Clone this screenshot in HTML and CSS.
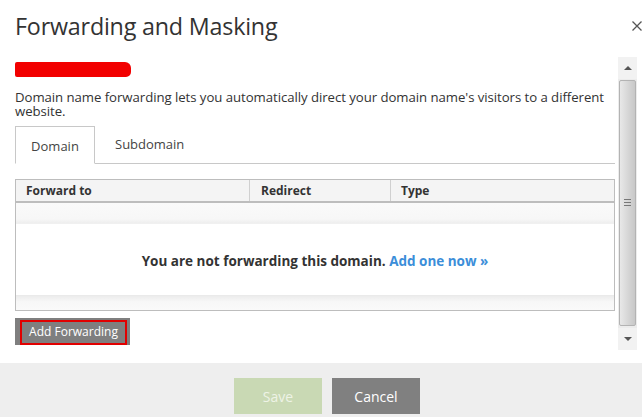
FILE: index.html
```html
<!DOCTYPE html>
<html>
<head>
<meta charset="utf-8">
<link rel="stylesheet" href="styles.css">
</head>
<body>
<div class="modal">
  <div class="header">
    <h1 class="title">Forwarding and Masking</h1>
    <svg class="close" width="10" height="10" viewBox="0 0 10 10"><path d="M0.5 0.5 L9.5 9.5 M9.5 0.5 L0.5 9.5" stroke="#555" stroke-width="1.3" fill="none"/></svg>
  </div>
  <div class="body-wrap">
    <div class="content">
      <div class="redacted"></div>
      <p class="desc">Domain name forwarding lets you automatically direct your domain name's visitors to a different website.</p>
      <div class="tabs">
        <div class="tab active">Domain</div>
        <div class="tab">Subdomain</div>
        <div class="tab-fill"></div>
      </div>
      <div class="table">
        <div class="thead">
          <div class="th c1">Forward to</div>
          <div class="th c2">Redirect</div>
          <div class="th c3">Type</div>
        </div>
        <div class="row-top"></div>
        <div class="empty">You are not forwarding this domain. <a class="link">Add one now &raquo;</a></div>
        <div class="row-bottom"></div>
      </div>
      <div class="add-wrap"><button class="add-btn">Add Forwarding</button></div>
    </div>
    <div class="scrollbar">
      <div class="sb-arrow up"><span class="tri-up"></span></div>
      <div class="sb-thumb"><span class="grip"></span></div>
      <div class="sb-arrow down"><span class="tri-down"></span></div>
    </div>
  </div>
  <div class="footer">
    <button class="btn save">Save</button>
    <button class="btn cancel">Cancel</button>
  </div>
</div>
</body>
</html>
```
FILE: styles.css
```css
* { box-sizing: border-box; }
html, body { margin: 0; padding: 0; background: #fff; }
body { font-family: "Open Sans", "Noto Sans", sans-serif; color: #333; width: 642px; height: 417px; overflow: hidden; }

.header { display: flex; justify-content: space-between; align-items: flex-start; padding: 8px 0 0 15px; height: 57px; }
.title { margin: 0; font-weight: 400; font-size: 23.3px; line-height: 36px; color: #333; letter-spacing: -0.2px; }
.close { margin-top: 13px; margin-right: 0; flex: none; }

.body-wrap { display: flex; height: 293px; }
.content { width: 600px; margin-left: 15px; }
.redacted { width: 116px; height: 15px; margin-top: 5px; background: #f20000; border-radius: 2px 6px 5px 2px; }
.desc { margin: 14px 0 0; font-size: 13.2px; line-height: 13.5px; color: #333; letter-spacing: -0.05px; }

.tabs { display: flex; margin-top: 8px; height: 38px; }
.tab { font-size: 13px; line-height: 37px; padding: 0 16px; color: #444; border-bottom: 1px solid #c8c8c8; }
.tab.active { border: 1px solid #c8c8c8; border-bottom: 1px solid #fff; width: 80px; padding: 0; text-align: center; line-height: 38px; }
.tab:nth-child(2) { padding: 0 0 0 20px; }
.tab-fill { flex: 1; border-bottom: 1px solid #c8c8c8; }

.table { margin-top: 15px; border: 1px solid #bdbdbd; height: 132px; display: flex; flex-direction: column; }
.thead { display: flex; height: 23px; background: #f4f4f4; border-bottom: 2px solid #bdbdbd; }
.th { font-size: 12px; font-weight: 700; line-height: 21px; padding-left: 10px; color: #333; }
.c1 { width: 234px; border-right: 1px solid #d0d0d0; }
.c2 { width: 141px; padding-left: 11px; border-right: 1px solid #d0d0d0; }
.c3 { flex: 1; }
.row-top { height: 21px; background: linear-gradient(#fafafa, #f7f7f7 80%, #eeeeee); border-bottom: 1px solid #f0f0f0; }
.empty { flex: 1; display: flex; align-items: center; justify-content: center; font-size: 13.5px; font-weight: 700; color: #333; white-space: pre; padding-top: 2px; }
.link { color: #3b8ed9; }
.row-bottom { height: 15px; background: linear-gradient(#ececec, #f7f7f7 40%, #fafafa); border-top: 1px solid #eaeaea; }

.add-wrap { margin-top: 7px; display: inline-block; background: #7f7f7f; padding: 1px 3px 0 5px; }
.add-btn { font-family: "Open Sans", "Noto Sans", sans-serif; font-size: 12px; color: #fff; background: #7f7f7f; border: 2px solid #e10000; height: 25px; width: 107px; padding: 0; line-height: 20px; }

.scrollbar { width: 19px; margin-left: 3px; display: flex; flex-direction: column; background: #ececec; }
.sb-arrow { height: 22px; background: #f2f2f2; display: flex; align-items: center; justify-content: center; }
.tri-up { width: 0; height: 0; border-left: 4px solid transparent; border-right: 4px solid transparent; border-bottom: 4px solid #555; }
.tri-down { width: 0; height: 0; border-left: 4px solid transparent; border-right: 4px solid transparent; border-top: 4px solid #555; }
.sb-thumb { flex: 1; margin: 1px 1px 2px 1px; border: 1px solid #b3b3b3; border-radius: 2px; background: linear-gradient(90deg, #e8e8e8, #d4d4d4 60%, #c8c8c8); display: flex; align-items: center; justify-content: center; }
.grip { width: 7px; height: 7px; border-top: 1px solid #777; border-bottom: 1px solid #777; margin-top: -2px; background: linear-gradient(#777, #777) center/7px 1px no-repeat; }

.footer { margin-top: 13px; height: 54px; background: #eeeeee; display: flex; justify-content: center; gap: 10px; padding: 15px 0 0 12px; }
.btn { font-family: "Open Sans", "Noto Sans", sans-serif; width: 88px; height: 36px; border: 0; font-size: 14px; padding: 0; }
.save { background: #c9d9b4; color: #eef3e6; }
.cancel { background: #808080; color: #fff; }
```
